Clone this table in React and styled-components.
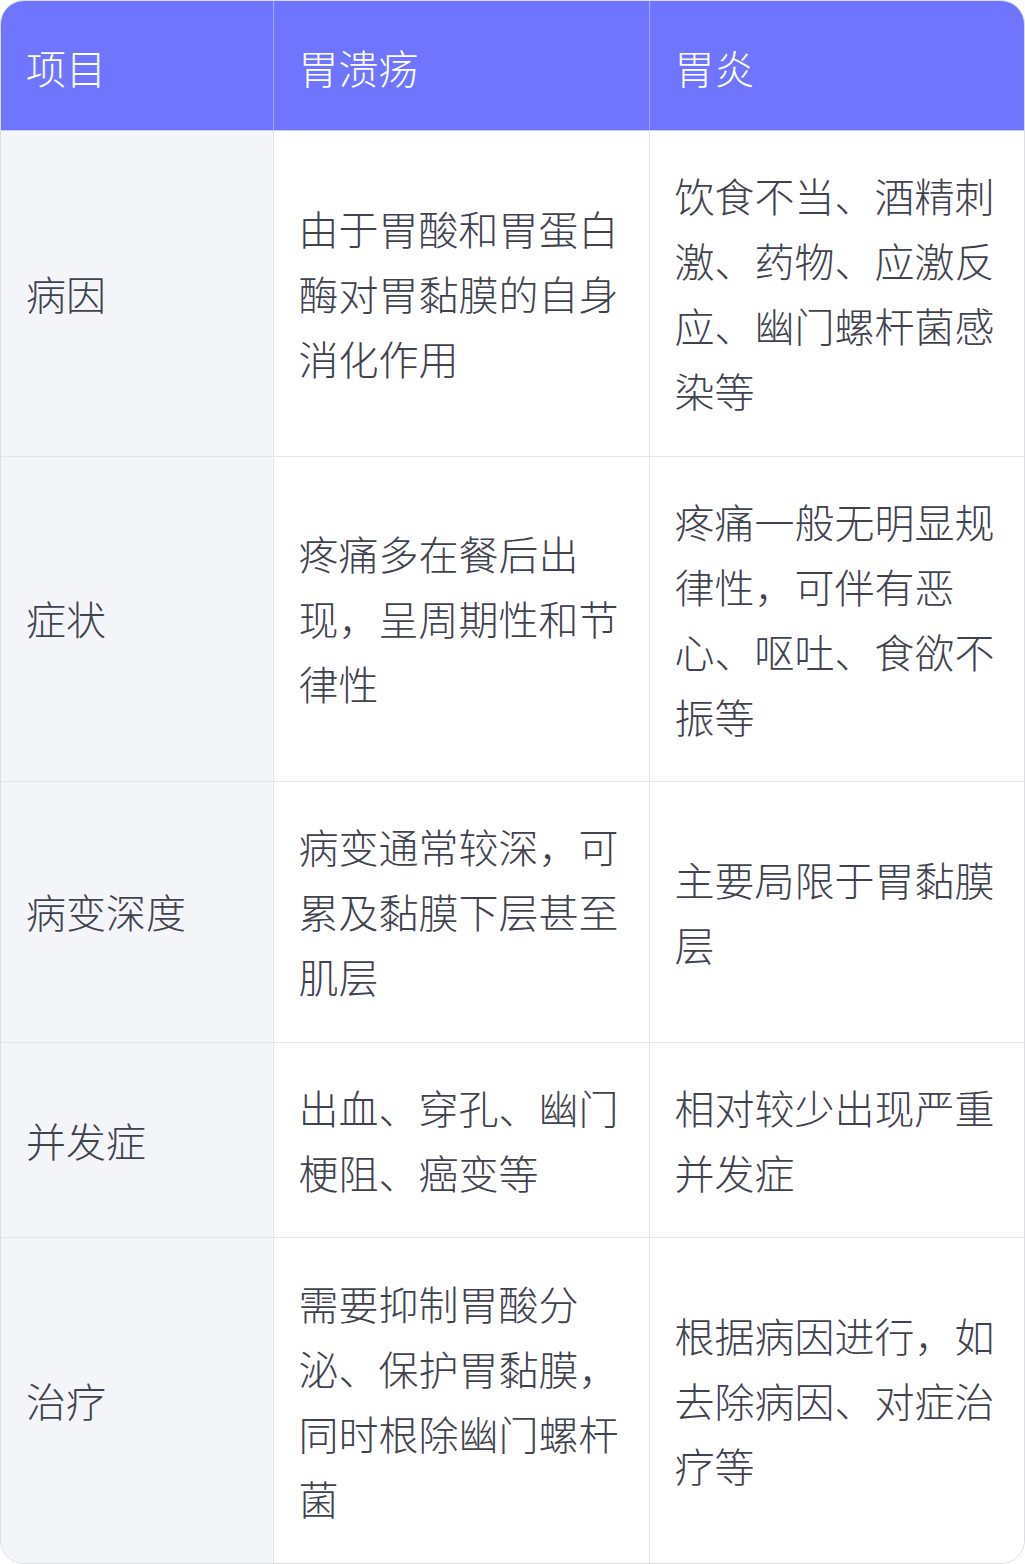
import React from "react";
import styled, { createGlobalStyle } from "styled-components";

const GlobalStyle = createGlobalStyle`
  html, body {
    margin: 0;
    padding: 0;
    background: #ffffff;
  }
  body {
    font-family: "Noto Sans CJK SC", "Noto Sans", sans-serif;
  }
`;

const TableWrap = styled.div`
  width: 1025px;
  box-sizing: border-box;
  border: 1px solid #dcdce2;
  border-radius: 24px;
  overflow: hidden;
  background: #ffffff;
`;

const Table = styled.table`
  width: 100%;
  border-collapse: collapse;
  table-layout: fixed;
`;

const HeadCell = styled.th`
  background: #6f75ff;
  color: #ffffff;
  font-weight: 300;
  font-size: 40px;
  line-height: 65px;
  text-align: left;
  padding: 34px 27px 30px 25px;
  border-right: 1px solid #a3a8ff;
  border-bottom: 1px solid #c9cbf5;
  &:last-child {
    border-right: none;
  }
`;

const Cell = styled.td`
  font-size: 40px;
  font-weight: 300;
  line-height: 65px;
  color: #40424e;
  padding: 32.3px 27px 32.3px 25px;
  vertical-align: middle;
  background: ${(p) => (p.$label ? "#f4f5f9" : "#ffffff")};
  border-right: 1px solid #e6e6ea;
  border-bottom: 1px solid #e6e6ea;
  word-break: break-all;
  &:last-child {
    border-right: none;
  }
  tr:last-child > & {
    border-bottom: none;
  }
`;

const rows = [
  {
    item: "病因",
    ulcer: "由于胃酸和胃蛋白酶对胃黏膜的自身消化作用",
    gastritis: "饮食不当、酒精刺激、药物、应激反应、幽门螺杆菌感染等",
  },
  {
    item: "症状",
    ulcer: "疼痛多在餐后出现，呈周期性和节律性",
    gastritis: "疼痛一般无明显规律性，可伴有恶心、呕吐、食欲不振等",
  },
  {
    item: "病变深度",
    ulcer: "病变通常较深，可累及黏膜下层甚至肌层",
    gastritis: "主要局限于胃黏膜层",
  },
  {
    item: "并发症",
    ulcer: "出血、穿孔、幽门梗阻、癌变等",
    gastritis: "相对较少出现严重并发症",
  },
  {
    item: "治疗",
    ulcer: "需要抑制胃酸分泌、保护胃黏膜，同时根除幽门螺杆菌",
    gastritis: "根据病因进行，如去除病因、对症治疗等",
  },
];

export default function App() {
  return (
    <>
      <GlobalStyle />
      <TableWrap>
        <Table>
          <colgroup>
            <col style={{ width: 272 }} />
            <col style={{ width: 376 }} />
            <col />
          </colgroup>
          <thead>
            <tr>
              <HeadCell>项目</HeadCell>
              <HeadCell>胃溃疡</HeadCell>
              <HeadCell>胃炎</HeadCell>
            </tr>
          </thead>
          <tbody>
            {rows.map((r) => (
              <tr key={r.item}>
                <Cell $label>{r.item}</Cell>
                <Cell>{r.ulcer}</Cell>
                <Cell>{r.gastritis}</Cell>
              </tr>
            ))}
          </tbody>
        </Table>
      </TableWrap>
    </>
  );
}
